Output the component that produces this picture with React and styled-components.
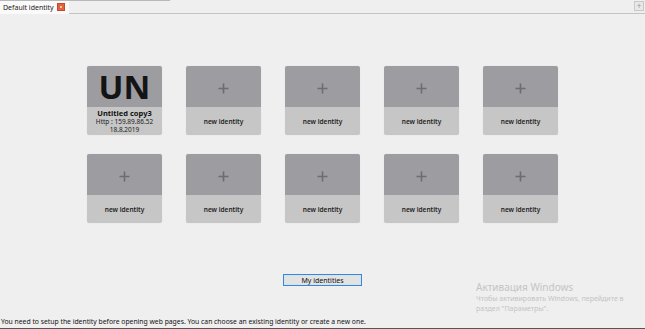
import React from "react";
import styled, { createGlobalStyle } from "styled-components";

const Global = createGlobalStyle`
  html, body { margin: 0; padding: 0; background: #efefef; }
  body { font-family: "Noto Sans", "DejaVu Sans", sans-serif; }
  #root { width: 645px; height: 329px; }
`;

const Page = styled.div`
  width: 645px;
  height: 329px;
  display: flex;
  flex-direction: column;
  background: #efefef;
  position: relative;
  overflow: hidden;
  box-sizing: border-box;
  border-bottom: 1px solid #555;
`;

const TopLine = styled.div`
  position: absolute;
  left: 0;
  top: 0;
  width: 170px;
  height: 1px;
  background: #b8b8b8;
`;

const TabBar = styled.div`
  height: 13px;
  display: flex;
  align-items: flex-end;
  justify-content: space-between;
  border-bottom: 1px solid #c4c4c4;
  box-sizing: content-box;
`;

const Tab = styled.div`
  height: 12px;
  display: flex;
  align-items: center;
  gap: 3px;
  padding: 0 4px 0 3px;
  background: #fafafa;
  font-size: 7px;
  color: #222;
  margin-bottom: -1px;
  border-bottom: 1px solid #fafafa;
`;

const CloseBox = styled.span`
  width: 6px;
  height: 6px;
  background: #e5603c;
  border: 0.5px solid #c04a2a;
  display: inline-flex;
  align-items: center;
  justify-content: center;
  &::after {
    content: "";
    width: 2px;
    height: 2px;
    background: #f4c3b5;
  }
`;

const AddTab = styled.div`
  width: 8px;
  height: 8px;
  margin: 0 1px 2px 0;
  border: 1px solid #c8c8c8;
  background: #e8e8e8;
  color: #999;
  font-size: 8px;
  line-height: 8px;
  text-align: center;
`;

const Main = styled.div`
  flex: 1;
  display: flex;
  flex-direction: column;
  align-items: center;
`;

const Grid = styled.div`
  margin-top: 52px;
  display: grid;
  grid-template-columns: repeat(5, 75px);
  column-gap: 24px;
  row-gap: 19px;
`;

const Card = styled.div`
  width: 75px;
  height: 69px;
  border-radius: 2px;
  display: flex;
  flex-direction: column;
  box-shadow: 0 0 1px rgba(0,0,0,0.15);
`;

const CardTop = styled.div`
  height: 41px;
  background: #9d9ca0;
  border-radius: 2px 2px 0 0;
  display: flex;
  align-items: center;
  justify-content: center;
  padding-top: ${p => (p.$initials ? "0" : "3px")};
  box-sizing: border-box;
  color: #141414;
  font-size: 33px;
  font-weight: 700;
  line-height: 34px;
  font-family: "Noto Sans", sans-serif;
`;

const CardBottom = styled.div`
  flex: 1;
  background: #c6c6c6;
  border-radius: 0 0 2px 2px;
  display: flex;
  flex-direction: column;
  align-items: center;
  justify-content: center;
  font-size: 6.5px;
  font-weight: 600;
  color: #1c1c1c;
  line-height: 9px;
`;

const Name = styled.div`
  font-size: 7.5px;
  font-weight: 700;
  line-height: 10px;
  color: #111;
`;

const Info = styled.div`
  font-size: 6.5px;
  font-weight: 400;
  line-height: 8px;
  color: #222;
`;

const Button = styled.button`
  margin-top: 51px;
  width: 79px;
  height: 12px;
  padding: 0;
  border: 1px solid #3a88d0;
  background: #e3e3e3;
  box-shadow: inset 0 0 0 1px #cfe3f4;
  font-family: "Noto Sans", sans-serif;
  font-size: 7px;
  line-height: 9px;
  color: #111;
`;

const Status = styled.div`
  height: 12px;
  font-size: 6.8px;
  line-height: 12px;
  padding-left: 1px;
  color: #111;
  white-space: nowrap;
`;

const Watermark = styled.div`
  position: absolute;
  left: 476px;
  top: 281px;
  color: #c4c4c4;
  font-family: "Noto Sans", sans-serif;
`;

const WmTitle = styled.div`
  font-size: 10px;
  line-height: 13px;
`;

const WmText = styled.div`
  font-size: 7px;
  line-height: 10px;
  width: 156px;
`;

const Plus = () => (
  <svg width="11" height="11" viewBox="0 0 11 11">
    <path d="M5.5 0.5v10M0.5 5.5h10" stroke="#6d6d6d" strokeWidth="1.6" />
  </svg>
);

const cards = Array.from({ length: 10 }, (_, i) => i);

export default function App() {
  return (
    <>
      <Global />
      <Page>
        <TopLine />
        <TabBar>
          <Tab>
            Default identity
            <CloseBox />
          </Tab>
          <AddTab>+</AddTab>
        </TabBar>
        <Main>
          <Grid>
            {cards.map(i =>
              i === 0 ? (
                <Card key={i}>
                  <CardTop $initials>UN</CardTop>
                  <CardBottom>
                    <Name>Untitled copy3</Name>
                    <Info>Http : 159.89.86.52</Info>
                    <Info>18.8.2019</Info>
                  </CardBottom>
                </Card>
              ) : (
                <Card key={i}>
                  <CardTop>
                    <Plus />
                  </CardTop>
                  <CardBottom>new identity</CardBottom>
                </Card>
              )
            )}
          </Grid>
          <Button>My identities</Button>
        </Main>
        <Status>
          You need to setup the identity before opening web pages. You can choose an existing identity or create a new one.
        </Status>
        <Watermark>
          <WmTitle>Активация Windows</WmTitle>
          <WmText>Чтобы активировать Windows, перейдите в раздел "Параметры".</WmText>
        </Watermark>
      </Page>
    </>
  );
}
